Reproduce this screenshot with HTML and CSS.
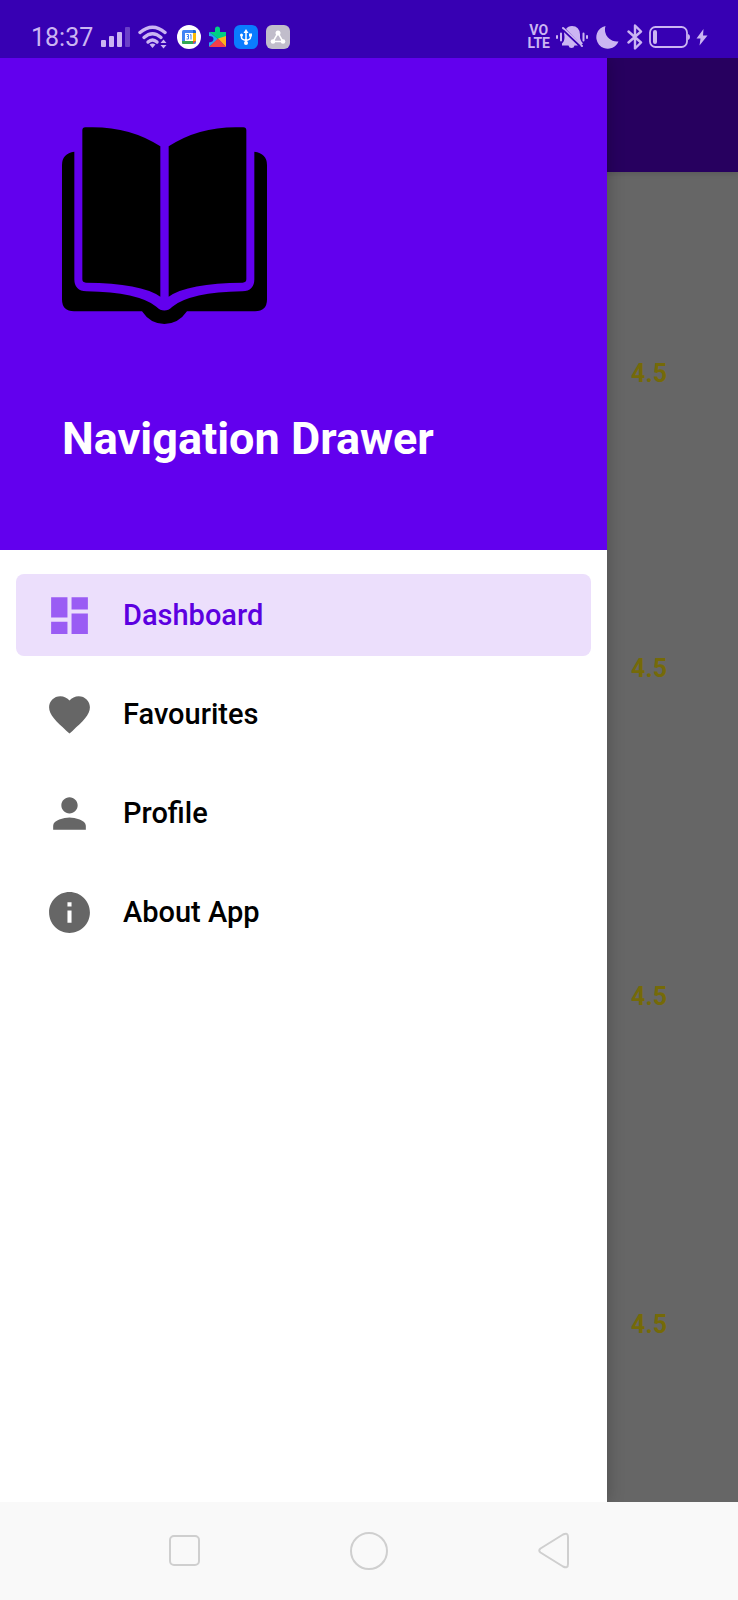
FILE: index.html
```html
<!DOCTYPE html>
<html lang="en">
<head>
<meta charset="utf-8">
<meta name="viewport" content="width=device-width, initial-scale=1">
<title>Navigation Drawer</title>
<link rel="stylesheet" href="styles.css">
</head>
<body>
<div class="screen">
  <header class="status">
    <div class="status-left">
      <time class="clock">18:37</time>
      <svg class="signal" width="29" height="24" viewBox="0 0 29 24" aria-hidden="true"><g fill="currentColor"><rect x="0" y="15" width="5" height="7" rx="1"/><rect x="8" y="11" width="5" height="11" rx="1"/><rect x="16" y="7" width="5" height="15" rx="1"/><rect x="24" y="2" width="5" height="20" rx="1" opacity=".35"/></g></svg>
      <svg class="wifi" width="31" height="24" viewBox="0 0 31 24" aria-hidden="true"><g fill="none" stroke="currentColor" stroke-width="3.400" stroke-linecap="round"><path d="M2 7.500Q14.500-3 27 7.500"/><path d="M6 12.500Q14.500 5 23 12.500"/><path d="M10 17Q14.500 13 19 17"/></g><path d="M11.500 19.500Q14.500 17.500 17.500 19.500L14.500 23Z" fill="currentColor"/><path d="M22.500 18L25.500 14.500L28.500 18ZM22.500 20L25.500 23.500L28.500 20Z" fill="currentColor"/></svg>
      <svg class="calendar" width="24" height="24" viewBox="0 0 24 24" aria-hidden="true"><circle cx="12" cy="12" r="12" fill="#fff"/><rect x="5" y="5" width="14" height="14" rx="1.500" fill="#4285f4"/><path d="M16 8h3v8h-3z" fill="#fbbc04"/><path d="M5 16h11v3H6.500Q5 19 5 17.500z" fill="#34a853"/><path d="M16 5h1.500Q19 5 19 6.500V8h-3z" fill="#1967d2"/><path d="M16 16h3l-3 3z" fill="#ea4335"/><rect x="8" y="8" width="8" height="8" fill="#fff"/><path d="M9.500 9.500h2v2H10h1.500v2.500h-2M13 10l1-.5V14.500" fill="none" stroke="#4285f4"/></svg>
      <svg class="puzzle" width="17" height="24" viewBox="0 0 17 24" aria-hidden="true"><path d="M0 7h6V4q0-2.500 2.500-2.500T11 4v3h6v6l-8 1z" fill="#00d084"/><path d="M0 11q4.500 0 4.500 3T0 17.500V22l9-8-9-7z" fill="#26a9f4"/><path d="M9 13.500L17 22H0z" fill="#f43f4a"/><path d="M17 11v11l-8-8.500z" fill="#ffb31a"/></svg>
      <svg class="usb" width="24" height="24" viewBox="0 0 24 24" aria-hidden="true"><rect width="24" height="24" rx="6" fill="#0a7cff"/><g fill="none" stroke="#fff" stroke-width="1.500"><path d="M12 7v11M7.500 10v2.500q0 2 4.500 3q4.500-1 4.500-3V10"/></g><path d="M12 4l2.500 4h-5z" fill="#fff"/><circle cx="7.500" cy="10" r="1.500" fill="#fff"/><path d="M15 8.500h3v3h-3z" fill="#fff"/><circle cx="12" cy="18" r="2" fill="#fff"/></svg>
      <svg class="share" width="24" height="24" viewBox="0 0 24 24" aria-hidden="true"><rect width="24" height="24" rx="6" fill="#c1bdcb"/><path d="M12 8L7 16.500h10z" fill="none" stroke="#fff" stroke-width="1.500"/><g fill="#fff"><circle cx="12" cy="8" r="2.500"/><circle cx="7" cy="16.500" r="2.300"/><circle cx="17" cy="16.500" r="2.300"/></g></svg>
    </div>
    <div class="status-right">
      <span class="volte"><span>VO</span><span>LTE</span></span>
      <svg class="mute" width="32" height="24" viewBox="0 0 32 24" aria-hidden="true"><g fill="currentColor"><path d="M10 4Q12 1 16 1Q23.500 1 24 9.500V13Q24.500 16 27 18.500L25 19.500z"/><path d="M8 7L22 20.500H18.500Q18 23 15.500 23T12.500 20.500H6V18.500Q8.500 16.500 8.500 12z"/></g><path d="M7 3L26 21" stroke="currentColor" stroke-width="2" stroke-linecap="round"/><path d="M7 5L24 21" stroke="#3700b3" stroke-width="1.600"/><path d="M1 11v2M5 8.500v7M27.500 8.500v7M31 11v2" stroke="currentColor" stroke-width="2" stroke-linecap="round"/></svg>
      <svg class="moon" width="25" height="24" viewBox="-2 0 25 24" aria-hidden="true"><path d="M9.500 1A11.500 11.500 0 1 0 22.500 16.500A12 12 0 0 1 9.500 1Z" fill="currentColor"/></svg>
      <svg class="bluetooth" width="18" height="26" viewBox="-2 0 18 26" aria-hidden="true"><path d="M1.500 7.500L14 18.500L8 24.500V1.500L14 7.500L1.500 18.500" fill="none" stroke="currentColor" stroke-width="2.400" stroke-linejoin="round" stroke-linecap="round"/></svg>
      <svg class="battery" width="41" height="22" viewBox="0 0 41 22" aria-hidden="true"><rect x="1" y="1" width="37" height="20" rx="5.500" fill="none" stroke="currentColor" stroke-width="1.800"/><rect x="4" y="4" width="4" height="14" rx="2" fill="currentColor"/><path d="M39 8q2 .5 2 3t-2 3z" fill="currentColor"/></svg>
      <svg class="bolt" width="12" height="18" viewBox="0 0 12 18" aria-hidden="true"><path d="M7.500 1L0.500 10.500H4.500L3.500 17.500L11.500 7.500H7z" fill="currentColor"/></svg>
    </div>
  </header>

  <div class="app">
    <main class="page">
      <div class="appbar"></div>
      <ul class="ratings">
        <li class="rating rating-short">4.5</li>
        <li class="rating">4.5</li>
        <li class="rating">4.5</li>
        <li class="rating">4.5</li>
      </ul>
    </main>

    <aside class="drawer">
      <div class="drawer-head">
        <svg class="book" width="205" height="197" viewBox="65 51 615 591" role="img" aria-label="Open book"><path d="M126 61Q126 52 135 52Q264 46 360 109V560Q302 519 137 518Q126 518 126 508ZM618 61Q618 52 609 52Q480 46 385 109V560Q442 519 607 518Q618 518 618 508Z"/><path d="M102 125V508Q102 543 138 544Q294 547 348 590Q372 613 396 590Q450 547 606 544Q642 543 642 508V125Q680 130 680 165V568Q680 604 644 604H440Q414 642 372 642T305 604H101Q65 604 65 568V165Q65 130 102 125Z"/></svg>
        <h1 class="title">Navigation Drawer</h1>
      </div>
      <nav class="menu" aria-label="Main">
        <a class="item item-active" href="#dashboard" aria-current="page"><svg class="icon" viewBox="0 0 24 24" aria-hidden="true"><path d="M3 13h8V3H3v10zm0 8h8v-6H3v6zm10 0h8V11h-8v10zm0-18v6h8V3h-8z"/></svg>Dashboard</a>
        <a class="item" href="#favourites"><svg class="icon" viewBox="0 0 24 24" aria-hidden="true"><path d="M12 21.350l-1.450-1.320C5.400 15.360 2 12.280 2 8.500 2 5.420 4.420 3 7.500 3c1.740 0 3.410.81 4.500 2.090C13.090 3.810 14.760 3 16.500 3 19.580 3 22 5.420 22 8.500c0 3.780-3.400 6.860-8.550 11.540L12 21.350z"/></svg>Favourites</a>
        <a class="item" href="#profile"><svg class="icon" viewBox="0 0 24 24" aria-hidden="true"><path d="M12 12c2.210 0 4-1.790 4-4s-1.790-4-4-4-4 1.790-4 4 1.790 4 4 4zm0 2c-2.670 0-8 1.340-8 4v2h16v-2c0-2.660-5.330-4-8-4z"/></svg>Profile</a>
        <a class="item" href="#about"><svg class="icon" viewBox="0 0 24 24" aria-hidden="true"><path d="M12 2C6.480 2 2 6.480 2 12s4.480 10 10 10 10-4.480 10-10S17.520 2 12 2zm1 15h-2v-6h2v6zm0-8h-2V7h2v2z"/></svg>About App</a>
      </nav>
    </aside>
  </div>

  <footer class="navbar">
    <button class="key" type="button" aria-label="Recent apps"><svg width="38" height="38" viewBox="0 0 38 38"><rect x="4" y="4" width="29" height="29" rx="4"/></svg></button>
    <button class="key" type="button" aria-label="Home"><svg width="38" height="38" viewBox="0 0 38 38"><circle cx="19" cy="19" r="18"/></svg></button>
    <button class="key" type="button" aria-label="Back"><svg width="38" height="38" viewBox="0 0 38 38"><path d="M5.500 16.500L28 2.500Q33 0 33 5V32Q33 37 28 34.500L5.500 20.500Q3 18.500 5.500 16.500Z"/></svg></button>
  </footer>
</div>
</body>
</html>
```

FILE: styles.css
```css
* {
  box-sizing: border-box;
}

body {
  margin: 0;
  font-family: Roboto, "Noto Sans", sans-serif;
}

.screen {
  display: flex;
  flex-direction: column;
  min-height: 100vh;
}

/* System status bar */
.status {
  display: flex;
  justify-content: space-between;
  padding: 16px 30px 0 31px;
  height: 58px;
  background: #3700b3;
  color: #cbb5f2;
}

.status-left,
.status-right {
  display: flex;
  align-items: center;
  height: 42px;
}

.status-left {
  gap: 8px;
}

.status-right {
  gap: 6px;
}

.clock {
  padding-top: 2px;
  font-size: 25px;
  line-height: 32px;
}

.volte {
  display: flex;
  flex-direction: column;
  align-items: center;
  font-size: 14px;
  font-weight: 700;
  line-height: 13px;
}

/* Page behind the drawer */
.app {
  position: relative;
  flex: 1;
  overflow: hidden;
  background: #666;
}

.appbar {
  height: 114px;
  background: #27005f;
  box-shadow: 0 1px 6px rgba(0, 0, 0, 0.15);
}

.ratings {
  margin: 0;
  padding: 186px 71px 0 0;
  list-style: none;
}

.rating {
  height: 328px;
  color: #756a08;
  font-size: 25px;
  font-weight: 700;
  line-height: 32px;
  text-align: right;
}

.rating-short {
  height: 295px;
}

.rating:last-child {
  height: 32px;
}

/* Drawer */
.drawer {
  position: absolute;
  inset: 0 131px 0 0;
  background: #fff;
  box-shadow: 0 0 16px rgba(0, 0, 0, 0.25);
}

.drawer-head {
  display: flex;
  flex-direction: column;
  align-items: flex-start;
  gap: 89px;
  padding: 69px 62px 85px;
  background: #6200ee;
}

.title {
  margin: 0;
  color: #fff;
  font-size: 45px;
  font-weight: 700;
  line-height: 52px;
}

.menu {
  display: flex;
  flex-direction: column;
  gap: 17px;
  padding: 24px 16px;
}

.item {
  display: flex;
  align-items: center;
  gap: 29px;
  height: 82px;
  padding: 0 29px;
  border-radius: 8px;
  color: #000;
  font-size: 29px;
  font-weight: 500;
  text-decoration: none;
}

.item-active {
  background: #ecdffc;
  color: #5c00e0;
}

.icon {
  width: 49px;
  height: 49px;
  fill: #666;
}

.item-active .icon {
  fill: #9a5cf4;
}

/* System navigation keys */
.navbar {
  display: grid;
  grid-template-columns: repeat(3, 1fr);
  padding: 0 12.5%;
  height: 98px;
  background: #f9f9f9;
}

.key {
  display: flex;
  align-items: center;
  justify-content: center;
  padding: 0;
  border: 0;
  background: none;
}

.key svg {
  fill: none;
  stroke: #cfcfcf;
  stroke-width: 2;
}
```
